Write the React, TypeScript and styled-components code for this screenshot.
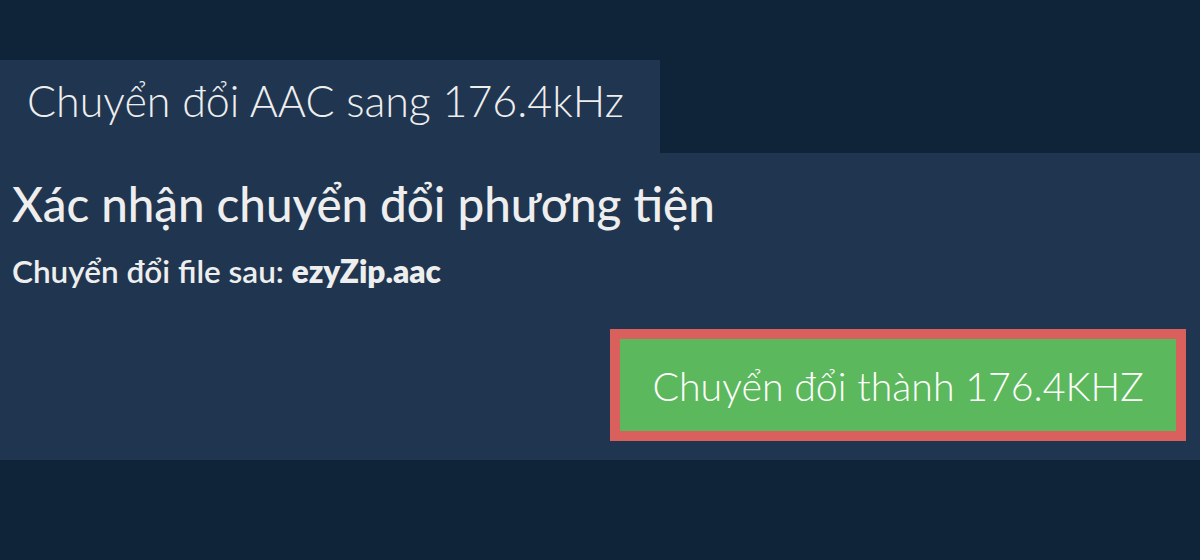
import React from 'react';
import styled, { createGlobalStyle } from 'styled-components';

const colors = {
  page: '#0f2339',
  panel: '#203650',
  text: '#eeeeee',
  green: '#5cb85c',
  red: '#d9605c',
};

const GlobalStyle = createGlobalStyle`
  html, body {
    margin: 0;
    padding: 0;
    background: ${colors.page};
    font-family: Lato, "Noto Sans", sans-serif;
    color: ${colors.text};
  }
`;

const Page = styled.div`
  width: 1200px;
  height: 560px;
  padding-top: 60px;
  box-sizing: border-box;
`;

const Tab = styled.div`
  width: 660px;
  height: 93px;
  box-sizing: border-box;
  padding: 0 0 13px 27px;
  display: flex;
  align-items: center;
  background: ${colors.panel};
  font-size: 43px;
  font-weight: 300;
`;

const Panel = styled.div`
  background: ${colors.panel};
  height: 307px;
  box-sizing: border-box;
  padding: 22px 14px 0 12px;
  display: flex;
  flex-direction: column;
`;

const Title = styled.h1`
  margin: 0;
  font-size: 47.5px;
  font-weight: 500;
  line-height: 58px;
`;

const Subtitle = styled.p`
  margin: 20px 0 0;
  font-size: 31.5px;
  font-weight: 600;
  line-height: 36px;

  b {
    font-weight: 800;
  }
`;

const Actions = styled.div`
  display: flex;
  justify-content: flex-end;
  margin-top: 40px;
`;

const ConvertButton = styled.button`
  width: 576px;
  height: 112px;
  box-sizing: border-box;
  border: 10px solid ${colors.red};
  background: ${colors.green};
  color: #ffffff;
  font-family: Lato, "Noto Sans", sans-serif;
  font-size: 39.3px;
  font-weight: 300;
  cursor: pointer;
  padding: 0;
`;

const App = () => (
  <>
    <GlobalStyle />
    <Page>
      <Tab>Chuyển đổi AAC sang 176.4kHz</Tab>
      <Panel>
        <Title>Xác nhận chuyển đổi phương tiện</Title>
        <Subtitle>
          Chuyển đổi file sau: <b>ezyZip.aac</b>
        </Subtitle>
        <Actions>
          <ConvertButton>Chuyển đổi thành 176.4KHZ</ConvertButton>
        </Actions>
      </Panel>
    </Page>
  </>
);

export default App;
